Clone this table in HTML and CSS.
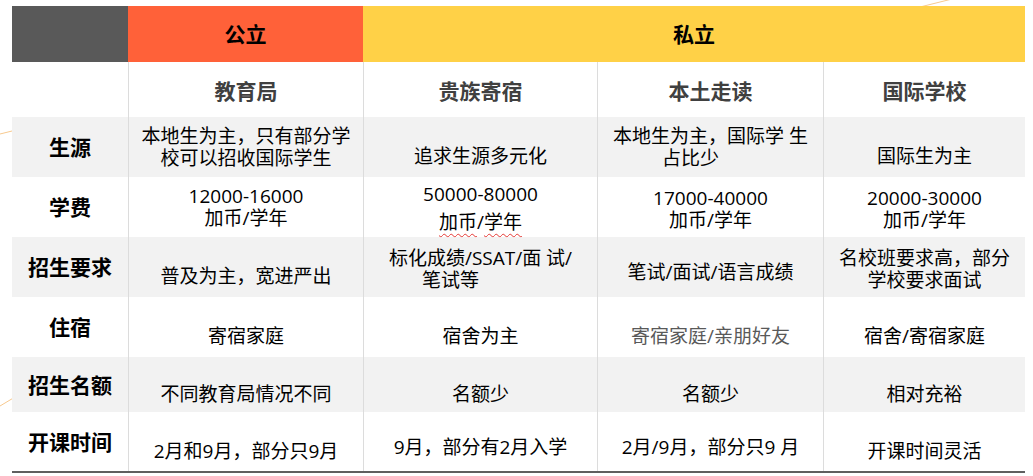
FILE: index.html
```html
<!DOCTYPE html>
<html lang="zh-CN">
<head>
<meta charset="utf-8">
<title>公立与私立学校对比</title>
<link rel="stylesheet" href="styles.css">
</head>
<body>
<div class="sheet">
  <svg class="deco" width="1033" height="476" viewBox="0 0 1033 476" aria-hidden="true">
    <line x1="960" y1="-3" x2="900" y2="12" />
    <line x1="0" y1="134" x2="20" y2="129" />
    <line x1="0" y1="406" x2="20" y2="394" />
  </svg>
  <div class="table">
    <div class="row head">
      <div class="corner"></div>
      <div class="pub">公立</div>
      <div class="priv">私立</div>
    </div>
    <div class="row sub">
      <div class="lbl"></div>
      <div class="c">教育局</div>
      <div class="c">贵族寄宿</div>
      <div class="c">本土走读</div>
      <div class="c">国际学校</div>
    </div>
    <div class="row body shade">
      <div class="lbl">生源</div>
      <div class="c m"><span class="t">本地生为主，只有部分学<br>校可以招收国际学生</span></div>
      <div class="c low">追求生源多元化</div>
      <div class="c m"><span class="t">本地生为主，国际学 生<br><span class="push-sm">占比少</span></span></div>
      <div class="c low">国际生为主</div>
    </div>
    <div class="row body">
      <div class="lbl">学费</div>
      <div class="c m"><span class="t">12000-16000<br>加币/学年</span></div>
      <div class="c m tall"><span class="t">50000-80000<br><span class="squiggle">加币</span>/<span class="squiggle">学年</span></span></div>
      <div class="c m nudge"><span class="t">17000-40000<br>加币/学年</span></div>
      <div class="c m nudge"><span class="t">20000-30000<br>加币/学年</span></div>
    </div>
    <div class="row body shade">
      <div class="lbl">招生要求</div>
      <div class="c low">普及为主，宽进严出</div>
      <div class="c m nudge"><span class="t">标化成绩/SSAT/面 试/<br><span class="push-lg">笔试等</span></span></div>
      <div class="c mid">笔试/面试/语言成绩</div>
      <div class="c m nudge"><span class="t">名校班要求高，部分<br>学校要求面试</span></div>
    </div>
    <div class="row body">
      <div class="lbl">住宿</div>
      <div class="c low">寄宿家庭</div>
      <div class="c low">宿舍为主</div>
      <div class="c low muted">寄宿家庭/亲朋好友</div>
      <div class="c low">宿舍/寄宿家庭</div>
    </div>
    <div class="row body shade short">
      <div class="lbl">招生名额</div>
      <div class="c low">不同教育局情况不同</div>
      <div class="c low">名额少</div>
      <div class="c low">名额少</div>
      <div class="c low">相对充裕</div>
    </div>
    <div class="row body last">
      <div class="lbl">开课时间</div>
      <div class="c low">2月和9月，部分只9月</div>
      <div class="c mid">9月，部分有2月入学</div>
      <div class="c mid">2月/9月，部分只9 月</div>
      <div class="c low">开课时间灵活</div>
    </div>
  </div>
</div>
</body>
</html>
```

FILE: styles.css
```css
* {
  box-sizing: border-box;
}

html, body {
  margin: 0;
  padding: 0;
  background: #ffffff;
}

body {
  font-family: "Open Sans", "Noto Sans CJK SC", sans-serif;
  color: #000000;
}

.sheet {
  position: relative;
  width: 1033px;
  height: 476px;
  padding: 6px 8px 0 12px;
  overflow: hidden;
}

.deco {
  position: absolute;
  left: 0;
  top: 0;
  z-index: 0;
}

.deco line {
  stroke: #f7c98e;
  stroke-width: 1;
}

.table {
  position: relative;
  z-index: 1;
  width: 1013px;
  border-bottom: 2px solid #5f5f5f;
}

.row {
  display: grid;
  grid-template-columns: 116px 235px 234px 226px 202px;
  background: #ffffff;
}

.row.shade {
  background: #f2f2f2;
}

.head {
  height: 56px;
  grid-template-columns: 116px 235px 662px;
}

.head > div {
  display: flex;
  align-items: center;
  justify-content: center;
  font-size: 21px;
  font-weight: 700;
  line-height: 24px;
}

.corner {
  background: #595959;
}

.pub {
  background: #ff6139;
}

.priv {
  background: #ffd147;
}

.sub {
  height: 55px;
}

.body {
  height: 60px;
}

.body.short {
  height: 55px;
}

.body.last {
  height: 59px;
}

.lbl {
  display: flex;
  align-items: center;
  justify-content: center;
  font-family: "Noto Sans CJK SC", sans-serif;
  font-size: 21px;
  font-weight: 700;
  line-height: 24px;
  padding-bottom: 2px;
}

.c {
  display: flex;
  align-items: center;
  justify-content: center;
  text-align: center;
  border-left: 1px solid #dcdcdc;
  font-size: 19px;
  line-height: 22px;
  white-space: nowrap;
}

.t {
  display: block;
  text-align: center;
}

.sub .c {
  font-family: "Noto Sans CJK SC", sans-serif;
  font-size: 21px;
  font-weight: 700;
  color: #404040;
  line-height: 24px;
}

.c.low {
  padding-top: 18px;
}

.c.mid {
  padding-top: 10px;
}

.c.m {
  padding-top: 0;
}

.c.nudge {
  padding-top: 3px;
}

.c.tall {
  line-height: 28px;
  padding-top: 1px;
}

.c.muted {
  color: #595959;
}

.push-sm {
  display: inline-block;
  margin-right: 40px;
}

.push-lg {
  display: inline-block;
  margin-right: 60px;
}

.squiggle {
  text-decoration: underline wavy #e53935;
  text-decoration-thickness: 1px;
  text-underline-offset: 4px;
}
```
